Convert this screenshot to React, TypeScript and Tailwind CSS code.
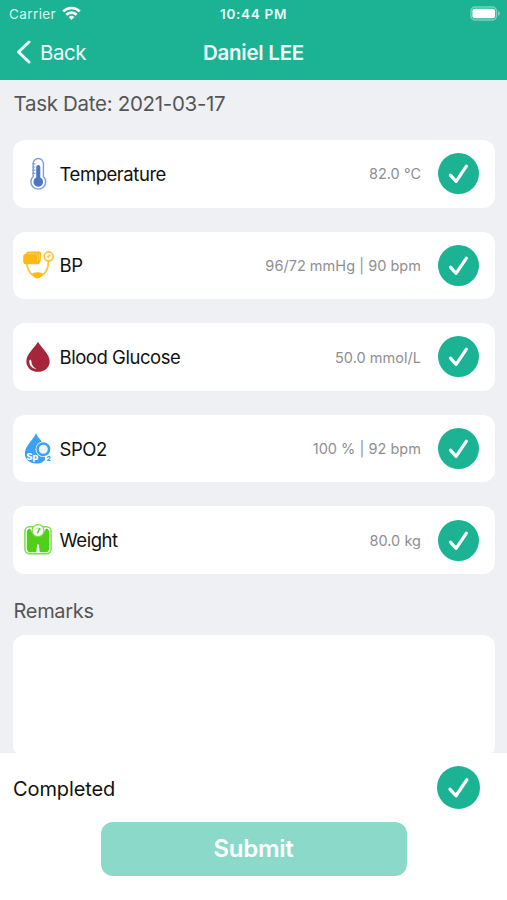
import type { ReactNode } from "react";

interface CheckCircleProps {
  size?: number;
}

function CheckCircle({ size = 41 }: CheckCircleProps) {
  return (
    <svg width={size} height={size} viewBox="0 0 41 41" className="shrink-0">
      <circle cx="20.5" cy="20.5" r="20.5" fill="#1bb394" />
      <path
        d="M12.4 22.2 L18.1 28.3 L28.4 13.2"
        fill="none"
        stroke="white"
        strokeWidth="3.2"
        strokeLinecap="round"
        strokeLinejoin="round"
      />
    </svg>
  );
}

function ThermometerIcon() {
  return (
    <svg width="30" height="34" viewBox="0 0 30 34" fill="none">
      <path
        d="M10.2 19.4 V6.6 a5.1 5.1 0 0 1 10.2 0 V19.4 a7.4 7.4 0 1 1 -10.2 0 Z"
        stroke="#7d9fd8"
        strokeWidth="1.4"
      />
      <path d="M9.2 6.8h3.2M9.2 10h3.2M9.2 13.2h3.2M9.2 16.4h3.2" stroke="#7d9fd8" strokeWidth="1.2" />
      <path d="M13.2 10 a2 2 0 0 1 4.1 0 V20.6 a4.8 4.8 0 1 1 -4.1 0 Z" fill="#4a78c5" />
    </svg>
  );
}

function BloodPressureIcon() {
  return (
    <svg width="30" height="34" viewBox="0 0 30 34" fill="none" className="overflow-visible">
      <path d="M3.2 13 C4 21 6.5 25.5 11 28 M18 28 C22.5 25.5 25.6 21 25.4 13" stroke="#fcc438" strokeWidth="1.8" />
      <path
        d="M3 5.8 Q3.2 3.6 5.4 3.6 H15.5 Q18.6 3.7 18.3 7.4 L17.7 12 Q17.3 16.2 14.6 16.2 H3.2 Q0.2 16.2 0.2 13.4 V8 Q0.4 6 3 5.8 Z"
        fill="#fdb913"
      />
      <path d="M5 5.8h7.8q2.2 0 2 2.2l-.4 5" stroke="#ffdc85" strokeWidth="0.8" />
      <path d="M16.7 5.6v6.8" stroke="#ffe7ab" strokeWidth="0.7" />
      <path d="M9.4 25.2 Q14.3 23.4 19.4 25.2 L18.2 28.8 Q14.3 32 10.6 28.8 Z" fill="#fdb913" />
      <circle cx="25.6" cy="8.4" r="4.5" fill="#fff6dd" stroke="#fcc438" strokeWidth="1.6" />
      <path d="M24.6 9.4 L27.2 6.8" stroke="#fcc438" strokeWidth="1.6" />
    </svg>
  );
}

function BloodDropIcon() {
  return (
    <svg width="30" height="34" viewBox="0 0 30 34" fill="none">
      <path d="M15 1.8 C17.6 7.2 26.7 14 26.7 21.2 C26.7 27.5 21.6 31.8 15 31.8 C8.4 31.8 3.3 27.5 3.3 21.2 C3.3 14 12.4 7.2 15 1.8 Z" fill="#a5263c" />
      <path d="M6.3 20.7 C6 25.5 9.2 28.8 13.7 28.9 C10.5 27.5 8.5 25 8.3 20.9 C8.1 19.3 6.5 19.2 6.3 20.7 Z" fill="white" />
    </svg>
  );
}

function Spo2Icon() {
  return (
    <svg width="30" height="34" viewBox="0 0 30 34" fill="none">
      <path d="M13 1.2 C15 6 24 14 24 21.4 C24 28 19.4 31.6 13.2 31.6 C7 31.6 1.8 27.8 1.8 21.6 C1.8 14 10.9 7 13 1.2 Z" fill="#3ba2f5" />
      <circle cx="20.3" cy="17.2" r="7.8" fill="white" />
      <circle cx="20.3" cy="17.2" r="5.8" fill="#e9f5ff" stroke="#3ba2f5" strokeWidth="2.5" />
      <text x="3.6" y="28" fill="white" fontSize="9" fontWeight="800" fontFamily="Inter, sans-serif">
        Sp
      </text>
      <path d="M22 23.8h6.4v7h-6.4z" fill="white" />
      <text x="23.4" y="29.4" fill="#3ba2f5" fontSize="6.8" fontWeight="800" fontFamily="Inter, sans-serif">
        2
      </text>
    </svg>
  );
}

function ScaleIcon() {
  return (
    <svg width="30" height="34" viewBox="0 0 30 34" fill="none">
      <rect x="1.9" y="3.7" width="26.2" height="27" rx="4.6" fill="white" stroke="#7ddd4c" strokeWidth="1.5" />
      <path
        d="M3.8 8.6 Q4.4 5.8 7.2 5.6 C9.4 14.4 20.6 14.4 22.8 5.6 Q25.6 5.8 26.2 8.6 V25.6 Q26 29.3 22.8 29.3 H16.7 L15.8 21.5 H14.2 L13.3 29.3 H7.2 Q4 29.3 3.8 25.6 Z"
        fill="#50d019"
      />
      <circle cx="15" cy="7.6" r="6" fill="white" stroke="#7ddd4c" strokeWidth="1.3" />
      <path d="M11.8 7.2 a3.4 3.4 0 0 1 6.4 0" stroke="#b4eb97" strokeWidth="1" />
      <path d="M14.5 9.8 L16.6 5.6" stroke="#50d019" strokeWidth="1.5" strokeLinecap="round" />
    </svg>
  );
}

interface Measurement {
  label: string;
  value: string;
  icon: ReactNode;
}

const measurements: Measurement[] = [
  { label: "Temperature", value: "82.0 °C", icon: <ThermometerIcon /> },
  { label: "BP", value: "96/72 mmHg | 90 bpm", icon: <BloodPressureIcon /> },
  { label: "Blood Glucose", value: "50.0 mmol/L", icon: <BloodDropIcon /> },
  { label: "SPO2", value: "100 % | 92 bpm", icon: <Spo2Icon /> },
  { label: "Weight", value: "80.0 kg", icon: <ScaleIcon /> },
];

function MeasurementCard({ label, value, icon }: Measurement) {
  return (
    <div className="flex h-[67.5px] items-center rounded-xl bg-white pr-4 pl-[10px]">
      {icon}
      <span className="ml-[7px] pt-0.5 text-[18.5px] tracking-[-0.45px] text-[#111]">{label}</span>
      <span className="mr-[16.5px] ml-auto pt-px text-[14.5px] tracking-[0.03px] text-[#8f8f91]">{value}</span>
      <CheckCircle />
    </div>
  );
}

function StatusBar() {
  return (
    <div className="grid h-7 grid-cols-3 items-center pr-1.5 pl-[9px] text-[13.5px]">
      <div className="flex items-center gap-1.5 text-[#d9f8ee]">
        <span className="tracking-[0.4px]">Carrier</span>
        <svg width="19" height="15" viewBox="0 0 19 15" fill="none" stroke="white" strokeWidth="2.7" className="-mt-0.5">
          <path d="M1.2 5.4 a11.8 11.8 0 0 1 16.6 0" />
          <path d="M4.3 8.8 a7.4 7.4 0 0 1 10.4 0" />
          <path d="M9.5 14 L6.6 11.1 a4.1 4.1 0 0 1 5.8 0 Z" fill="white" stroke="none" />
        </svg>
      </div>
      <span className="-ml-[3px] text-center font-semibold tracking-[0.7px] whitespace-nowrap text-[#eafff8]">10:44 PM</span>
      <svg width="31" height="15" viewBox="0 0 31 15" className="-mt-[2px] ml-auto">
        <rect x="1" y="1" width="25.4" height="13" rx="4" fill="none" stroke="#78d2bf" strokeWidth="1.5" />
        <rect x="2.4" y="2.8" width="22.6" height="9.4" rx="2" fill="white" />
        <path d="M28 5 q2 .7 2 2.4 q0 1.7 -2 2.4 Z" fill="#78d2bf" />
      </svg>
    </div>
  );
}

export default function App() {
  return (
    <div className="flex h-[900px] w-[507px] flex-col overflow-hidden bg-[#eff0f4] font-['Inter','Liberation_Sans',sans-serif]">
      <header className="h-20 shrink-0 bg-[#1bb394]">
        <StatusBar />
        <div className="grid h-12 grid-cols-[1fr_auto_1fr] items-center px-4 text-[#effff9]">
          <button className="flex items-center gap-[9px]">
            <svg width="15" height="24" viewBox="0 0 15 24" fill="none">
              <path d="M13 2 L2.5 12 L13 22" stroke="#effff9" strokeWidth="3" strokeLinecap="round" strokeLinejoin="round" />
            </svg>
            <span className="pt-0.5 text-[20.5px] tracking-[-0.5px]">Back</span>
          </button>
          <h1 className="pt-0.5 text-[20.5px] font-semibold tracking-[-0.25px]">Daniel LEE</h1>
        </div>
      </header>

      <main className="flex min-h-0 flex-1 flex-col px-[12.5px]">
        <h2 className="h-[60px] shrink-0 pt-[9px] pl-[1px] text-[20.5px] leading-[30px] tracking-[-0.3px] text-[#555557]">
          Task Date: 2021-03-17
        </h2>
        <div className="flex flex-col gap-[24.1px]">
          {measurements.map((item) => (
            <MeasurementCard key={item.label} {...item} />
          ))}
        </div>
        <h2 className="mt-[22px] h-[39.5px] shrink-0 pl-[1px] text-[20px] leading-[30px] tracking-[-0.3px] text-[#555557]">
          Remarks
        </h2>
        <div className="h-[122px] shrink-0 rounded-xl bg-white" />
      </main>

      <footer className="h-[147px] shrink-0 bg-white">
        <div className="flex h-[69px] items-center justify-between pr-[27.5px] pl-[13px]">
          <span className="pt-0.5 text-[20px] tracking-[-0.1px] text-[#111]">Completed</span>
          <CheckCircle size={43} />
        </div>
        <button className="mx-auto block h-[54px] w-[306px] rounded-xl bg-[#8bd9c8] text-[24px] font-semibold tracking-[-0.3px] text-white">
          Submit
        </button>
      </footer>
    </div>
  );
}
